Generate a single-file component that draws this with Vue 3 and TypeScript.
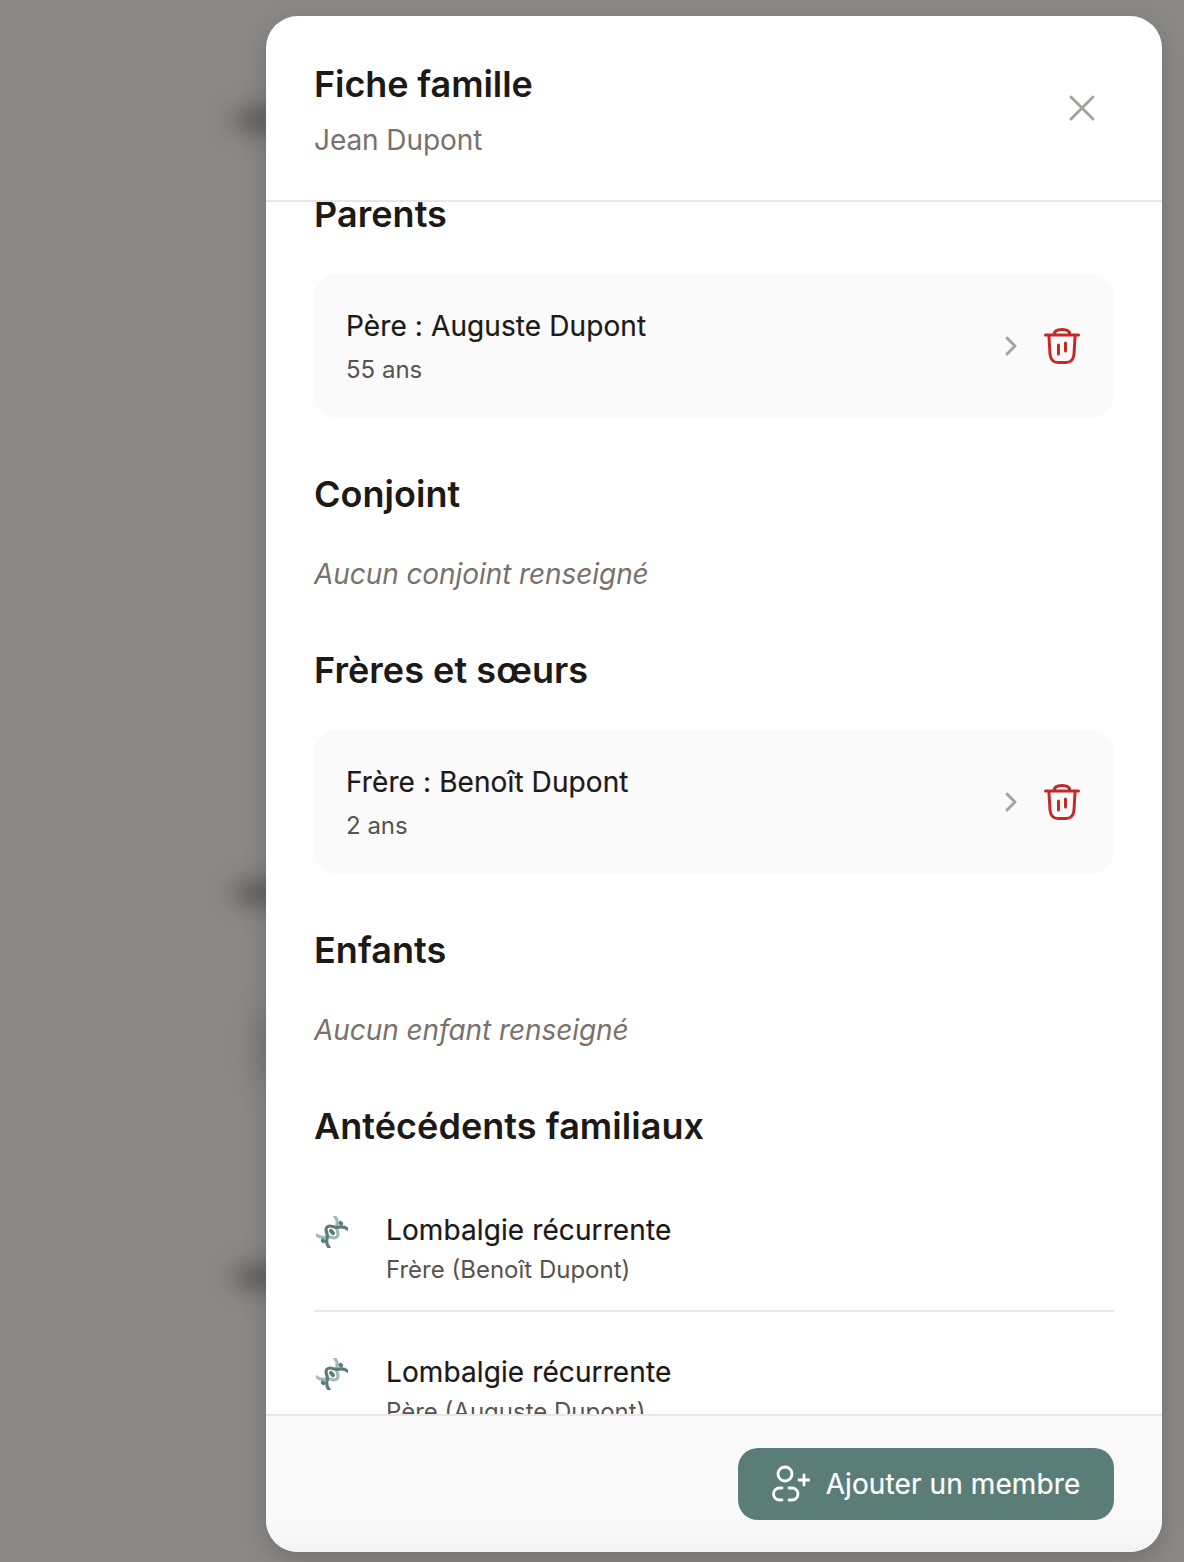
<script setup lang="ts">
interface Member {
  label: string
  age: string
}

interface History {
  title: string
  who: string
}

const parents: Member[] = [{ label: 'Père : Auguste Dupont', age: '55 ans' }]
const siblings: Member[] = [{ label: 'Frère : Benoît Dupont', age: '2 ans' }]
const history: History[] = [
  { title: 'Lombalgie récurrente', who: 'Frère (Benoît Dupont)' },
  { title: 'Lombalgie récurrente', who: 'Père (Auguste Dupont)' }
]
</script>

<template>
  <div class="overlay">
    <div class="blob b1"></div>
    <div class="blob b2"></div>
    <div class="blob b3"></div>
    <div class="blob b4"></div>
    <div class="dialog">
      <header class="head">
        <div>
          <h1>Fiche famille</h1>
          <p class="sub">Jean Dupont</p>
        </div>
        <svg class="close" viewBox="0 0 28 28" fill="none" stroke="#a8a29e" stroke-width="3" stroke-linecap="round">
          <path d="M3 3l22 22M25 3L3 25" />
        </svg>
      </header>

      <div class="scroll">
        <div class="content">
          <section>
            <h2>Parents</h2>
            <div v-for="m in parents" :key="m.label" class="card">
              <div class="card-text">
                <div class="name">{{ m.label }}</div>
                <div class="age">{{ m.age }}</div>
              </div>
              <svg class="chev" viewBox="0 0 14 22" fill="none" stroke="#a8a29e" stroke-width="3" stroke-linecap="round" stroke-linejoin="round">
                <path d="M3 3l8 8-8 8" />
              </svg>
              <svg class="trash" viewBox="0 0 36 36" fill="none" stroke="#c62828" stroke-width="3" stroke-linecap="round" stroke-linejoin="round">
                <path d="M1.500 7h33M10 7C10 3.500 13 1.500 18 1.500S26 3.500 26 7M5 9l1 17c.3 5 3.500 8.500 8 8.500h8c4.500 0 7.700-3.500 8-8.500l1-17M14.500 17v9M21.500 15v8" />
              </svg>
            </div>
          </section>

          <section>
            <h2>Conjoint</h2>
            <p class="empty">Aucun conjoint renseigné</p>
          </section>

          <section>
            <h2>Frères et sœurs</h2>
            <div v-for="m in siblings" :key="m.label" class="card">
              <div class="card-text">
                <div class="name">{{ m.label }}</div>
                <div class="age">{{ m.age }}</div>
              </div>
              <svg class="chev" viewBox="0 0 14 22" fill="none" stroke="#a8a29e" stroke-width="3" stroke-linecap="round" stroke-linejoin="round">
                <path d="M3 3l8 8-8 8" />
              </svg>
              <svg class="trash" viewBox="0 0 36 36" fill="none" stroke="#c62828" stroke-width="3" stroke-linecap="round" stroke-linejoin="round">
                <path d="M1.500 7h33M10 7C10 3.500 13 1.500 18 1.500S26 3.500 26 7M5 9l1 17c.3 5 3.500 8.500 8 8.500h8c4.500 0 7.700-3.500 8-8.500l1-17M14.500 17v9M21.500 15v8" />
              </svg>
            </div>
          </section>

          <section>
            <h2>Enfants</h2>
            <p class="empty">Aucun enfant renseigné</p>
          </section>

          <section>
            <h2>Antécédents familiaux</h2>
            <div class="list">
              <div v-for="(h, i) in history" :key="i" class="row">
                <svg class="dna" viewBox="0 0 32 32" fill="none" stroke-linecap="round">
                  <g transform="rotate(-45 16 16)">
                    <path d="M3 7C3 13 7 14 9.500 16S12 23 16 23S20.500 18 22.500 16S29 13 29 7" stroke="#a3b9b5" stroke-width="3.200" />
                    <path d="M3 25C3 19 7 18 9.500 16S12 9 16 9S20.500 14 22.500 16S29 19 29 25" stroke="#5a7d78" stroke-width="3.200" />
                    <path d="M3.500 15.500v1M16 14.500v3M28.500 15.500v1" stroke="#5a7d78" stroke-width="4" />
                  </g>
                </svg>
                <div>
                  <div class="name">{{ h.title }}</div>
                  <div class="age">{{ h.who }}</div>
                </div>
              </div>
            </div>
          </section>
        </div>
      </div>

      <footer class="foot">
        <button class="add">
          <svg viewBox="0 0 38 38" fill="none" stroke="#fff" stroke-width="2.800" stroke-linecap="round">
            <circle cx="13" cy="9" r="7" />
            <path d="M10 23H7.500a6 6 0 0 0 0 12H10M17 23h3a6 6 0 0 1 0 12h-3" />
            <path d="M27 15h10M32 10v10" />
          </svg>
          Ajouter un membre
        </button>
      </footer>
    </div>
  </div>
</template>

<style>
html,
body {
  margin: 0;
  background: #8a8988;
}
</style>

<style scoped>
* {
  box-sizing: border-box;
}

.overlay {
  position: relative;
  height: 1562px;
  overflow: hidden;
  background: #8a8987;
  font-family: Inter, "Liberation Sans", sans-serif;
  display: flex;
  justify-content: flex-end;
  padding: 16px 22px 10px 0;
}

.blob {
  position: absolute;
  left: 232px;
  width: 60px;
  height: 20px;
  border-radius: 50%;
  background: #4f4e4d;
  filter: blur(12px);
}

.b1 { top: 110px; }
.b2 { top: 883px; }
.b3 { top: 1267px; }
.b4 { top: 1012px; left: 252px; height: 70px; width: 30px; background: #7a7978; }

.dialog {
  position: relative;
  width: 896px;
  height: 1536px;
  background: #fff;
  border-radius: 32px;
  overflow: hidden;
  display: flex;
  flex-direction: column;
  box-shadow: 0 8px 28px rgba(0, 0, 0, 0.18);
}

.head {
  height: 186px;
  flex: none;
  padding: 48px 66px 0 48px;
  border-bottom: 2px solid #e7e7e7;
  display: flex;
  justify-content: space-between;
}

h1 {
  margin: 0;
  font-size: 36px;
  line-height: 40px;
  font-weight: 600;
  letter-spacing: -0.1px;
  color: #1c1917;
}

.sub {
  margin: 16px 0 0;
  font-size: 28px;
  line-height: 40px;
  letter-spacing: -0.08px;
  color: #78716c;
}

.close {
  width: 28px;
  height: 28px;
  margin-top: 30px;
}

.scroll {
  flex: 1;
  overflow: hidden;
  min-height: 0;
}

.content {
  margin-top: -8px;
  padding: 0 48px;
}

section {
  margin-bottom: 56px;
}

h2 {
  margin: 0 0 40px;
  font-size: 36px;
  line-height: 40px;
  font-weight: 600;
  letter-spacing: 0.05px;
  color: #1c1917;
}

.card {
  height: 144px;
  padding: 0 34px 0 32px;
  background: #fafafa;
  border-radius: 24px;
  display: flex;
  align-items: center;
}

.card-text {
  flex: 1;
  padding-top: 2px;
}

.name {
  font-size: 28px;
  line-height: 40px;
  letter-spacing: 0.1px;
  -webkit-text-stroke: 0.2px #1c1917;
  color: #1c1917;
}

.age {
  font-size: 24px;
  line-height: 36px;
  margin-top: 2px;
  color: #57534e;
}

.card .age {
  margin-top: 6px;
}

.chev {
  width: 14px;
  height: 22px;
  margin-right: 26px;
}

.trash {
  width: 36px;
  height: 36px;
}

.empty {
  margin: 0;
  font-size: 28px;
  line-height: 40px;
  font-style: italic;
  letter-spacing: -0.08px;
  color: #78716c;
}

.list {
  margin-top: -16px;
}

.row {
  display: flex;
  gap: 38px;
  padding: 40px 0 22px;
  border-bottom: 2px solid #e7e7e7;
}

.row:last-child {
  border-bottom: none;
}

.dna {
  width: 32px;
  height: 32px;
  margin: 6px 0 0 2px;
  flex: none;
}

.foot {
  height: 138px;
  flex: none;
  border-top: 2px solid #e7e7e7;
  background: linear-gradient(#fafafa 75%, #f3f3f3);
  padding: 32px 48px 0;
  display: flex;
  justify-content: flex-end;
}

.add {
  width: 376px;
  height: 72px;
  border: none;
  border-radius: 20px;
  background: #5a7d78;
  color: #fff;
  font: 28px/40px Inter, "Liberation Sans", sans-serif;
  letter-spacing: 0.1px;
  -webkit-text-stroke: 0.2px #fff;
  display: flex;
  align-items: center;
  justify-content: center;
  gap: 16px;
}

.add svg {
  width: 38px;
  height: 38px;
}
</style>
